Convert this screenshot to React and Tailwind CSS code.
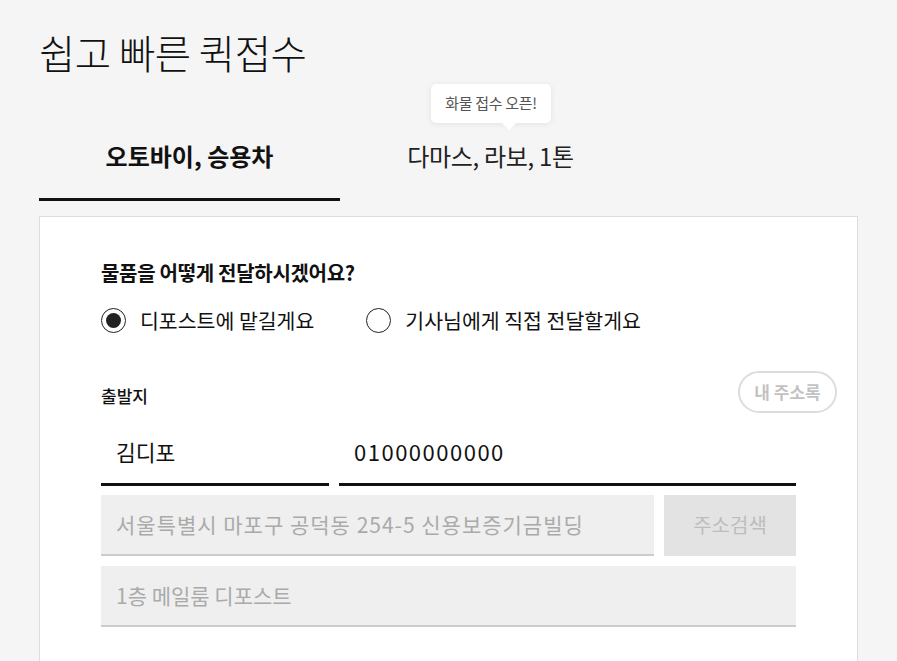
import React, { useState } from 'react';

const font = { fontFamily: '"Noto Sans CJK KR", "Noto Sans", sans-serif' };

function Radio({ checked, label, onClick }) {
  return (
    <button type="button" onClick={onClick} className="flex items-center gap-[14px]">
      <span className="w-[25px] h-[25px] rounded-full border-[1.5px] border-[#222] bg-white flex items-center justify-center">
        {checked && <span className="w-[15px] h-[15px] rounded-full bg-[#222]" />}
      </span>
      <span className="text-[20.5px] text-[#111]">{label}</span>
    </button>
  );
}

function App() {
  const [tab, setTab] = useState(0);
  const [method, setMethod] = useState(0);

  return (
    <div className="min-h-[661px] bg-[#f5f5f5] px-[39px] pt-[25px]" style={font}>
      <h1 className="text-[39.5px] font-light text-[#111] leading-[54px] tracking-[-0.5px]">쉽고 빠른 퀵접수</h1>

      <div className="flex mt-[35px] w-[602px]">
        <button
          onClick={() => setTab(0)}
          className={`w-[301px] h-[87px] flex items-center justify-center text-[24px] ${tab === 0 ? 'font-bold text-[#111] border-b-[3px] border-[#111]' : 'text-[#222]'}`}
        >
          오토바이, 승용차
        </button>
        <button
          onClick={() => setTab(1)}
          className={`relative w-[301px] h-[87px] flex items-center justify-center text-[24px] ${tab === 1 ? 'font-bold text-[#111] border-b-[3px] border-[#111]' : 'text-[#222]'}`}
        >
          <span className="absolute left-[91px] top-[-30px] w-[120px] h-[39px] bg-white rounded-[5px] shadow-[0_1px_6px_rgba(0,0,0,0.08)] flex items-center justify-center text-[15px] font-normal text-[#555] tracking-[-0.3px]">
            화물 접수 오픈!
            <span className="absolute bottom-[-5px] left-[73px] w-[10px] h-[10px] bg-white rotate-45" />
          </span>
          <span className="pb-[3px] tracking-[-0.3px]">다마스, 라보, 1톤</span>
        </button>
      </div>

      <div className="mt-[15px] w-[819px] bg-white border border-[#ddd] px-[61px] pt-[41px] pb-[60px] relative">
        <p className="text-[20px] font-bold text-[#111] tracking-[-0.3px]">물품을 어떻게 전달하시겠어요?</p>
        <div className="flex gap-[52px] mt-[17px]">
          <Radio checked={method === 0} label="디포스트에 맡길게요" onClick={() => setMethod(0)} />
          <Radio checked={method === 1} label="기사님에게 직접 전달할게요" onClick={() => setMethod(1)} />
        </div>

        <div className="flex items-center justify-between mt-[43px] -mr-[41px]">
          <span className="text-[17px] font-medium text-[#111]">출발지</span>
          <button className="w-[99px] h-[42px] rounded-full border-2 border-[#ddd] text-[17px] font-bold text-[#c2c2c2] -mt-[8px]">
            내 주소록
          </button>
        </div>

        <div className="flex gap-[10px] mt-[7px]">
          <input
            defaultValue="김디포"
            className="w-[228px] h-[66px] px-[15px] pt-[1px] text-[21.5px] text-[#111] border-b-[3px] border-[#111] bg-transparent outline-none"
          />
          <input
            defaultValue="01000000000"
            className="flex-1 h-[66px] px-[15px] text-[22px] tracking-[1.5px] text-[#111] border-b-[3px] border-[#111] bg-transparent outline-none"
          />
        </div>

        <div className="flex gap-[10px] mt-[9px]">
          <input
            placeholder="서울특별시 마포구 공덕동 254-5 신용보증기금빌딩"
            className="flex-1 h-[61px] px-[15px] text-[21px] tracking-[1px] bg-[#efefef] border-b-2 border-[#ccc] placeholder:text-[#aaa] outline-none"
          />
          <button className="w-[132px] h-[61px] bg-[#e3e3e3] text-[20px] text-[#bdbdbd]">주소검색</button>
        </div>

        <input
          placeholder="1층 메일룸 디포스트"
          className="w-full h-[61px] mt-[10px] px-[15px] text-[21px] bg-[#efefef] border-b-2 border-[#ccc] placeholder:text-[#aaa] outline-none"
        />
      </div>
    </div>
  );
}

export default App;
